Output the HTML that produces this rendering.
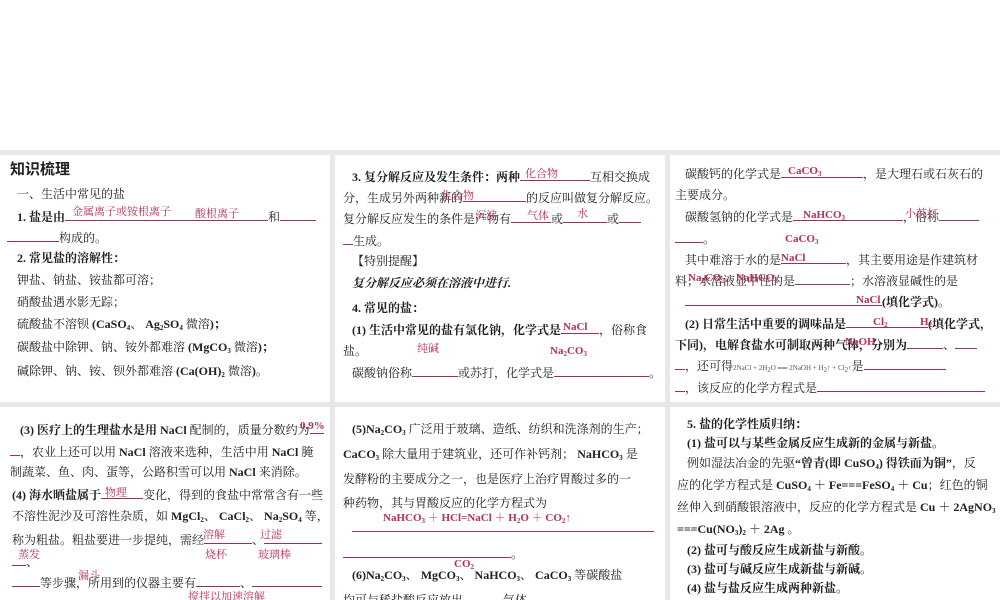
<!DOCTYPE html>
<html><head><meta charset="utf-8"><style>
*{margin:0;padding:0}
body{width:1000px;height:600px;position:relative;background:#fff;overflow:hidden;font-family:"Liberation Serif","Noto Serif CJK SC","Noto Sans CJK SC",serif;color:#222}
.g{position:absolute;left:0;top:150px;width:1000px;height:450px;background:#e8e8e8}
.p{position:absolute;background:#fff;overflow:hidden}
.t{position:absolute;font-size:12px;white-space:nowrap;line-height:16px}
.b{font-weight:bold}
.r{position:absolute;color:#b8304f;font-size:11px;white-space:nowrap;line-height:14px}
.rb{font-weight:bold}
.u{display:inline-block;border-bottom:1px solid #a03050;height:12px;vertical-align:baseline}
sub{font-size:7px;vertical-align:-2px}
</style></head><body>
<div class="g"></div>
<div class="p" style="left:0;top:155px;width:330px;height:247px">
<div class="t b" style="left:10px;top:4px;font-size:15px;font-family:'Noto Sans CJK SC',sans-serif;line-height:20px">知识梳理</div>
<div class="t" style="left:17px;top:31px">一、生活中常见的盐</div>
<div class="t b" style="left:17px;top:53px">1. 盐是由<span class="u" style="width:203px"></span><span style="font-weight:normal">和</span><span class="u" style="width:36px"></span></div>
<div class="r" style="left:72px;top:50px">金属离子或铵根离子</div>
<div class="r" style="left:195px;top:52px">酸根离子</div>
<div class="t" style="left:7px;top:74px"><span class="u" style="width:52px"></span>构成的。</div>
<div class="t b" style="left:17px;top:95px">2. 常见盐的溶解性：</div>
<div class="t" style="left:17px;top:117px">钾盐、钠盐、铵盐都可溶；</div>
<div class="t" style="left:17px;top:139px">硝酸盐遇水影无踪；</div>
<div class="t" style="left:17px;top:161px">硫酸盐不溶钡 <b>(CaSO<sub>4</sub></b>、 <b>Ag<sub>2</sub>SO<sub>4</sub></b> 微溶<b>)；</b></div>
<div class="t" style="left:17px;top:184px">碳酸盐中除钾、钠、铵外都难溶 <b>(MgCO<sub>3</sub></b> 微溶<b>)；</b></div>
<div class="t" style="left:17px;top:208px">碱除钾、钠、铵、钡外都难溶 <b>(Ca(OH)<sub>2</sub></b> 微溶<b>)。</b></div>
</div>
<div class="p" style="left:335px;top:155px;width:330px;height:247px">
<div class="t" style="left:17px;top:13px"><b>3. 复分解反应及发生条件：两种</b><span class="u" style="width:70px"></span>互相交换成</div>
<div class="r" style="left:190px;top:12px">化合物</div>
<div class="t" style="left:8px;top:34px">分，生成另外两种新的<span class="u" style="width:63px"></span>的反应叫做复分解反应。</div>
<div class="r" style="left:106px;top:34px">化合物</div>
<div class="t" style="left:8px;top:55px">复分解反应发生的条件是产物有<span class="u" style="width:40px"></span>或<span class="u" style="width:44px"></span>或<span class="u" style="width:22px"></span></div>
<div class="r" style="left:140px;top:54px">沉淀</div>
<div class="r" style="left:192px;top:54px">气体</div>
<div class="r" style="left:242px;top:52px">水</div>
<div class="t" style="left:8px;top:77px"><span class="u" style="width:10px"></span>生成。</div>
<div class="t" style="left:17px;top:98px">【特别提醒】</div>
<div class="t b" style="left:17px;top:120px;font-style:italic">复分解反应必须在溶液中进行.</div>
<div class="t b" style="left:17px;top:145px">4. 常见的盐：</div>
<div class="t b" style="left:17px;top:166px">(1) 生活中常见的盐有氯化钠，化学式是<span class="u" style="width:38px"></span><span style="font-weight:normal">，俗称食</span></div>
<div class="r rb" style="left:228px;top:165px">NaCl</div>
<div class="t" style="left:8px;top:188px">盐。</div>
<div class="r" style="left:82px;top:187px">纯碱</div>
<div class="r rb" style="left:215px;top:189px">Na<sub>2</sub>CO<sub>3</sub></div>
<div class="t" style="left:17px;top:209px">碳酸钠俗称<span class="u" style="width:46px"></span>或苏打，化学式是<span class="u" style="width:95px"></span>。</div>
</div>
<div class="p" style="left:670px;top:155px;width:330px;height:247px">
<div class="t" style="left:15px;top:10px">碳酸钙的化学式是<span class="u" style="width:82px"></span>，是大理石或石灰石的</div>
<div class="r rb" style="left:118px;top:9px">CaCO<sub>3</sub></div>
<div class="t" style="left:5px;top:32px">主要成分。</div>
<div class="t" style="left:15px;top:53px">碳酸氢钠的化学式是<span class="u" style="width:110px"></span>，俗称<span class="u" style="width:40px"></span></div>
<div class="r rb" style="left:133px;top:53px">NaHCO<sub>3</sub></div>
<div class="r" style="left:235px;top:52px">小苏打</div>
<div class="t" style="left:5px;top:75px"><span class="u" style="width:28px"></span>。</div>
<div class="r rb" style="left:115px;top:77px">CaCO<sub>3</sub></div>
<div class="t" style="left:15px;top:96px">其中难溶于水的是<span class="u" style="width:65px"></span>，其主要用途是作建筑材</div>
<div class="r rb" style="left:111px;top:96px">NaCl</div>
<div class="t" style="left:5px;top:117px">料；水溶液显中性的是<span class="u" style="width:55px"></span>；水溶液显碱性的是</div>
<div class="r rb" style="left:18px;top:116px">Na<sub>2</sub>CO<sub>3</sub>、NaHCO<sub>3</sub></div>
<div class="t" style="left:15px;top:138px"><span class="u" style="width:197px"></span><b>(填化学式)。</b></div>
<div class="r rb" style="left:186px;top:138px">NaCl</div>
<div class="t b" style="left:15px;top:160px">(2) 日常生活中重要的调味品是<span class="u" style="width:82px"></span>(填化学式，</div>
<div class="r rb" style="left:203px;top:160px">Cl<sub>2</sub></div>
<div class="r rb" style="left:250px;top:160px">H<sub>2</sub></div>
<div class="t b" style="left:5px;top:181px">下同)，电解食盐水可制取两种气体，分别为<span class="u" style="width:36px"></span><span style="font-weight:normal">、</span><span class="u" style="width:22px"></span></div>
<div class="r rb" style="left:175px;top:180px">NaOH</div>
<div class="t" style="left:5px;top:202px"><span class="u" style="width:10px"></span>，还可得<span style="font-size:7px;color:#555">2NaCl + 2H<sub>2</sub>O ══ 2NaOH + H<sub>2</sub>↑ + Cl<sub>2</sub>↑</span>是<span class="u" style="width:82px"></span></div>
<div class="t" style="left:5px;top:224px"><span class="u" style="width:10px"></span>，该反应的化学方程式是<span class="u" style="width:168px"></span></div>
</div>
<div class="p" style="left:0;top:407px;width:330px;height:193px">
<div class="t" style="left:20px;top:14px"><b>(3) 医疗上的生理盐水是用 NaCl</b> 配制的，质量分数约为<span class="u" style="width:14px"></span></div>
<div class="r rb" style="left:300px;top:12px">0.9%</div>
<div class="t" style="left:10px;top:36px"><span class="u" style="width:10px"></span>，农业上还可以用 <b>NaCl</b> 溶液来选种，生活中用 <b>NaCl</b> 腌</div>
<div class="t" style="left:10px;top:57px">制蔬菜、鱼、肉、蛋等，公路积雪可以用 <b>NaCl</b> 来消除。</div>
<div class="t" style="left:12px;top:79px"><b>(4) 海水晒盐属于</b><span class="u" style="width:42px"></span>变化，得到的食盐中常常含有一些</div>
<div class="r" style="left:105px;top:79px">物理</div>
<div class="t" style="left:12px;top:101px">不溶性泥沙及可溶性杂质，如 <b>MgCl<sub>2</sub></b>、 <b>CaCl<sub>2</sub></b>、 <b>Na<sub>2</sub>SO<sub>4</sub></b> 等，</div>
<div class="t" style="left:12px;top:124px">称为粗盐。粗盐要进一步提纯，需经<span class="u" style="width:48px"></span>、<span class="u" style="width:58px"></span></div>
<div class="r" style="left:203px;top:121px">溶解</div>
<div class="r" style="left:260px;top:121px">过滤</div>
<div class="r" style="left:18px;top:141px">蒸发</div>
<div class="r" style="left:205px;top:141px">烧杯</div>
<div class="r" style="left:258px;top:141px">玻璃棒</div>
<div class="t" style="left:12px;top:146px"><span class="u" style="width:14px"></span>、</div>
<div class="t" style="left:12px;top:167px"><span class="u" style="width:28px"></span>等步骤，所用到的仪器主要有<span class="u" style="width:44px"></span>、<span class="u" style="width:70px"></span></div>
<div class="r" style="left:78px;top:162px">漏斗</div>
<div class="r" style="left:188px;top:183px">搅拌以加速溶解</div>
</div>
<div class="p" style="left:335px;top:407px;width:330px;height:193px">
<div class="t" style="left:17px;top:14px"><b>(5)Na<sub>2</sub>CO<sub>3</sub></b> 广泛用于玻璃、造纸、纺织和洗涤剂的生产；</div>
<div class="t" style="left:8px;top:39px"><b>CaCO<sub>3</sub></b> 除大量用于建筑业，还可作补钙剂； <b>NaHCO<sub>3</sub></b> 是</div>
<div class="t" style="left:8px;top:64px">发酵粉的主要成分之一，也是医疗上治疗胃酸过多的一</div>
<div class="t" style="left:8px;top:88px">种药物，其与胃酸反应的化学方程式为</div>
<div class="r rb" style="left:48px;top:104px">NaHCO<sub>3</sub> ＋ HCl=NaCl ＋ H<sub>2</sub>O ＋ CO<sub>2</sub>↑</div>
<div style="position:absolute;left:17px;top:124px;width:302px;border-bottom:1px solid #a03050"></div>
<div class="t" style="left:8px;top:138px"><span class="u" style="width:168px"></span>。</div>
<div class="r rb" style="left:119px;top:150px">CO<sub>2</sub></div>
<div class="t" style="left:17px;top:160px"><b>(6)Na<sub>2</sub>CO<sub>3</sub></b>、 <b>MgCO<sub>3</sub></b>、 <b>NaHCO<sub>3</sub></b>、 <b>CaCO<sub>3</sub></b> 等碳酸盐</div>
<div class="t" style="left:8px;top:184px">均可与稀盐酸反应放出<span class="u" style="width:40px"></span>气体。</div>
</div>
<div class="p" style="left:670px;top:407px;width:330px;height:193px">
<div class="t b" style="left:17px;top:9px">5. 盐的化学性质归纳：</div>
<div class="t b" style="left:17px;top:28px">(1) 盐可以与某些金属反应生成新的金属与新盐。</div>
<div class="t" style="left:17px;top:48px">例如湿法冶金的先驱<b>“曾青(即 CuSO<sub>4</sub>) 得铁而为铜”</b>，反</div>
<div class="t" style="left:7px;top:70px">应的化学方程式是 <b>CuSO<sub>4</sub> ＋ Fe===FeSO<sub>4</sub> ＋ Cu</b>；红色的铜</div>
<div class="t" style="left:7px;top:92px">丝伸入到硝酸银溶液中，反应的化学方程式是 <b>Cu ＋ 2AgNO<sub>3</sub></b></div>
<div class="t b" style="left:7px;top:114px">===Cu(NO<sub>3</sub>)<sub>2</sub> ＋ 2Ag <span style="font-weight:normal">。</span></div>
<div class="t b" style="left:17px;top:135px">(2) 盐可与酸反应生成新盐与新酸。</div>
<div class="t b" style="left:17px;top:154px">(3) 盐可与碱反应生成新盐与新碱。</div>
<div class="t b" style="left:17px;top:173px">(4) 盐与盐反应生成两种新盐。</div>
</div>
</body></html>
